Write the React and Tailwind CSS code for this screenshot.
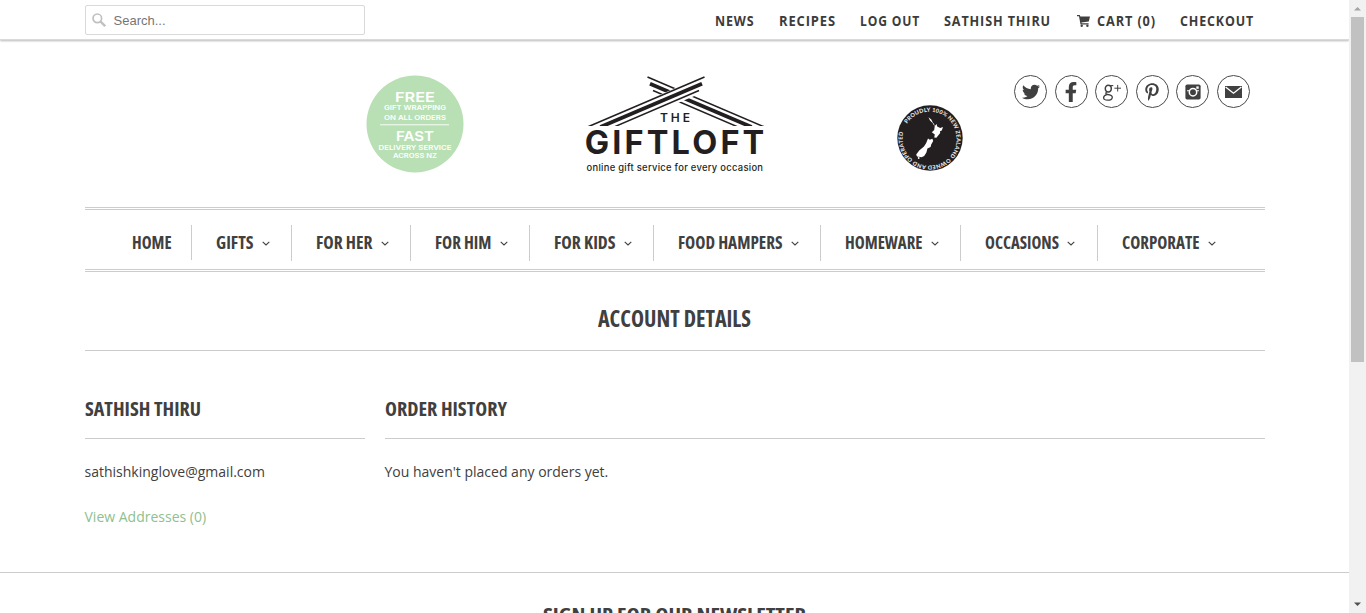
import { useLayoutEffect, useRef, useState } from 'react';
import { FaTwitter, FaFacebookF, FaPinterestP } from 'react-icons/fa';

/* Condenses its text horizontally so that it fills the width of its box. */
function Condensed({ className, children }) {
  const box = useRef(null);
  const text = useRef(null);
  const [scale, setScale] = useState(1);
  useLayoutEffect(() => {
    setScale(box.current.getBoundingClientRect().width / text.current.getBoundingClientRect().width);
  }, []);
  return (
    <span ref={box} className={`block shrink-0 whitespace-nowrap ${className}`}>
      <span ref={text} className="inline-block origin-left" style={{ transform: `scaleX(${scale})` }}>
        {children}
      </span>
    </span>
  );
}

function CartIcon() {
  return (
    <svg viewBox="0 0 13 12" className="mr-[7px] h-3 w-[13px] shrink-0" fill="#404040">
      <path d="M0 0h2.8l.5 1.5H13L11.8 6.6 4.4 7.4l.2.9h7v1.2H3.5L2 1.3H0z" />
      <circle cx="4.7" cy="10.7" r="1.2" />
      <circle cx="10.4" cy="10.7" r="1.2" />
    </svg>
  );
}

function TopBar() {
  return (
    <header className="flex h-10 shrink-0 justify-center border-b border-[#dadada] bg-white shadow-[0_1px_2px_rgba(0,0,0,0.28)]">
      <div className="flex w-[1180px] items-start justify-between">
        <div className="mt-[5px] ml-[0.5px] flex h-[30px] w-[280px] items-center rounded-[2px] border border-[#d9d9d9] pl-[6px]">
          <svg viewBox="0 0 14 14" className="h-[14px] w-[14px]" fill="none" stroke="#c0c0c0">
            <circle cx="5.3" cy="5.3" r="4.3" strokeWidth="1.7" />
            <path d="M8.6 8.6l4.6 4.6" strokeWidth="2.3" />
          </svg>
          <span className="mt-[2px] ml-[7.5px] font-['Liberation_Sans',sans-serif] text-[13px] text-[#757575]">Search...</span>
        </div>
        <nav className="mr-[11px] flex h-[41px] items-center gap-6 text-[14.5px] font-bold tracking-[1px] text-[#3c3c3c] [font-stretch:88%]">
          <Condensed className="w-[39.5px]">NEWS</Condensed>
          <Condensed className="w-[57px]">RECIPES</Condensed>
          <Condensed className="w-[60px]">LOG OUT</Condensed>
          <Condensed className="w-[107px]">SATHISH THIRU</Condensed>
          <span className="ml-[2px] flex items-center">
            <CartIcon />
            <Condensed className="w-[59px]">CART (0)</Condensed>
          </span>
          <Condensed className="w-[74px]">CHECKOUT</Condensed>
        </nav>
      </div>
    </header>
  );
}

function DeliveryBadge() {
  return (
    <svg viewBox="0 0 98 98" className="mt-[35px] ml-[281px] h-[98px] w-[98px] shrink-0">
      <circle cx="49" cy="49" r="48.5" fill="#b9dfb4" />
      <g fill="#fff" fontFamily="Inter, sans-serif" fontWeight="600" textAnchor="middle">
        <text x="49" y="26.5" fontSize="13.5" textLength="40" lengthAdjust="spacingAndGlyphs">FREE</text>
        <text x="49" y="34.8" fontSize="6.6" textLength="62" lengthAdjust="spacingAndGlyphs">GIFT WRAPPING</text>
        <text x="49" y="44.6" fontSize="6.6" textLength="62" lengthAdjust="spacingAndGlyphs">ON ALL ORDERS</text>
        <text x="49" y="65.5" fontSize="13.5" textLength="38" lengthAdjust="spacingAndGlyphs">FAST</text>
        <text x="49" y="74.6" fontSize="6.6" textLength="73" lengthAdjust="spacingAndGlyphs">DELIVERY SERVICE</text>
        <text x="49" y="83.3" fontSize="6.6" textLength="44" lengthAdjust="spacingAndGlyphs">ACROSS NZ</text>
      </g>
      <path d="M14 49.8h69" stroke="#fff" strokeWidth="0.9" />
    </svg>
  );
}

function Logo() {
  return (
    <svg viewBox="580 70 190 110" className="mt-[30px] ml-[116px] h-[110px] w-[190px] shrink-0">
      <clipPath id="eaves">
        <path d="M580 70h190v56H580z" />
      </clipPath>
      <g clipPath="url(#eaves)" fill="none" stroke="#231f20">
        <path d="M647.5 77l118 50.4" strokeWidth="1.6" />
        <path d="M650 83.8l101.6 43.2" strokeWidth="3.8" />
        <path d="M653 90.5l85 36.5" strokeWidth="1.5" />
        <path d="M586 127L703 76l-1.5 17L620 127.5z" fill="#fff" stroke="none" />
        <path d="M586.5 127.4L704.5 77" strokeWidth="1.6" />
        <path d="M600.4 127l101.6-43.2" strokeWidth="3.8" />
        <path d="M614 127l85-36.5" strokeWidth="1.5" />
      </g>
      <g fill="#231f20" fontFamily="Inter, sans-serif">
        <text x="660" y="122" fontSize="12" fontWeight="600" textLength="30" lengthAdjust="spacing">THE</text>
        <text x="584.8" y="154" fontSize="32.5" fontWeight="700" textLength="179.5" lengthAdjust="spacing">GIFTLOFT</text>
      </g>
      <text x="586.5" y="170.6" fill="#231f20" fontFamily="Inter, sans-serif" fontSize="9.4" fontWeight="500" textLength="176.5" lengthAdjust="spacing">
        online gift service for every occasion
      </text>
    </svg>
  );
}

function NewZealandBadge() {
  return (
    <svg viewBox="0 0 66 66" className="mt-[65px] ml-[127px] h-[66px] w-[66px] shrink-0">
      <defs>
        <path id="ring" d="M10.1 18.7A27 27 0 1 1 7.3 24.2A27 27 0 0 1 10.1 18.7" />
      </defs>
      <circle cx="33" cy="33" r="32.7" fill="#231f20" />
      <text fill="#e8e8e8" fontFamily="Lato, sans-serif" fontSize="5.6" fontWeight="900">
        <textPath href="#ring" textLength="160" lengthAdjust="spacing">PROUDLY 100% NEW ZEALAND OWNED AND OPERATED</textPath>
      </text>
      <g fill="#fff">
        <path d="M31.5 12.2l2.8 2.3 1.6 3.2 1.2 1.4.5 2.1 2-2.3.6 2.6 3 1.4 2.8-.9-1.2 3.4-1.8.8.2 1.8-3.8 4.8-2.2-.4.6-3-3-2.2 2.4-2.2.5-3.4-2.1-3.6-2.6-2.6z" />
        <path d="M31 33.6l1.8 1.2 2.6-1 .8 2.2-2 3.6-.6 2.4-3.2 1.6-1 3.8-2.2 3.6-2.6 1.2-4.6-.8-.8-1.8 3-4.2 4.8-3.8 2.2-3.6z" />
        <circle cx="21.7" cy="53" r="0.9" />
      </g>
    </svg>
  );
}

function Round({ children }) {
  return (
    <span className="flex h-[33px] w-[33px] items-center justify-center rounded-full border border-[#4a4a4a] text-[#404040]">
      {children}
    </span>
  );
}

function Social() {
  return (
    <div className="mt-[35px] ml-[51.5px] flex gap-[7.6px]">
      <Round><FaTwitter size={18} /></Round>
      <Round><FaFacebookF size={20} /></Round>
      <Round>
        <svg viewBox="0 0 20 20" className="h-5 w-5" fill="none" stroke="#404040">
          <ellipse cx="6.3" cy="6.6" rx="3" ry="3.4" strokeWidth="1.5" />
          <path d="M8.2 3.6h3.1" strokeWidth="1.1" />
          <path d="M5 9.8c-2 1.3-1.3 2.4.6 2.7 2.9.4 4.7.9 4.7 2.7 0 1.7-1.9 3-4.7 3-2.4 0-4-.9-4-2.5 0-1.5 1.3-2.5 3.2-3" strokeWidth="1.3" />
          <path d="M12.4 6.2h6.6M15.7 2.9v6.6" strokeWidth="1" />
        </svg>
      </Round>
      <Round><FaPinterestP size={18} /></Round>
      <Round>
        <svg viewBox="0 0 16 16" className="h-4 w-4">
          <rect x="0.4" y="0.5" width="15.2" height="15" rx="1.7" fill="#404040" />
          <path d="M11.3 2.4h2.4v2.4h-2.4z" fill="#fff" />
          <path d="M2 6.8h3M11 6.8h3" stroke="#fff" strokeWidth="1.1" />
          <circle cx="8" cy="8.2" r="3.7" fill="none" stroke="#fff" strokeWidth="1.5" />
        </svg>
      </Round>
      <Round>
        <svg viewBox="0 0 17 12" className="h-3 w-[17px]">
          <path fill="#404040" d="M0 0h17v12H0z" />
          <path d="M.6 1l7.9 6.2L16.4 1" fill="none" stroke="#fff" strokeWidth="1.4" />
        </svg>
      </Round>
    </div>
  );
}

const MENU = [
  { label: 'GIFTS', cell: 'w-[100px]', text: 'w-[37.5px]' },
  { label: 'FOR HER', cell: 'w-[119px]', text: 'w-[56.5px]' },
  { label: 'FOR HIM', cell: 'w-[119px]', text: 'w-[56.5px]' },
  { label: 'FOR KIDS', cell: 'w-[124px]', text: 'w-[61.5px]' },
  { label: 'FOOD HAMPERS', cell: 'w-[167px]', text: 'w-[104.5px]' },
  { label: 'HOMEWARE', cell: 'w-[140px]', text: 'w-[77.5px]' },
  { label: 'OCCASIONS', cell: 'w-[137px]', text: 'w-[74px]' },
  { label: 'CORPORATE', cell: 'w-[120px]', text: 'w-[77.5px]' },
];

function MainMenu() {
  return (
    <nav className="flex h-[65px] border-y-[3px] border-double border-[#ccc] pt-[15px] pl-[47px] text-[18.5px] font-bold text-[#404040] [font-stretch:75%]">
      <div className="flex h-[35px] w-[60px] items-center border-r border-[#ccc] pb-px">
        <Condensed className="w-[39.5px]">HOME</Condensed>
      </div>
      {MENU.map((m, i) => (
        <div key={m.label} className={`flex h-9 items-center pb-[2px] pl-[24px] ${m.cell} ${i < MENU.length - 1 ? 'border-r border-[#ccc]' : ''}`}>
          <Condensed className={m.text}>{m.label}</Condensed>
          <svg viewBox="0 0 8 5" className="mt-[3px] ml-[8.5px] h-[5px] w-2 shrink-0" fill="none" stroke="#404040" strokeWidth="1.1">
            <path d="M.7.8L4 3.9 7.3.8" />
          </svg>
        </div>
      ))}
    </nav>
  );
}

function Scrollbar() {
  return (
    <div className="flex w-[17px] shrink-0 flex-col items-center bg-[#f1f1f1]">
      <svg viewBox="0 0 17 17" className="h-[17px] w-[17px] shrink-0" fill="#a3a3a3"><path d="M5 10.5h7L8.5 7z" /></svg>
      <div className="h-[345px] w-[13px] bg-[#c1c1c1]" />
      <svg viewBox="0 0 17 17" className="mt-auto h-[17px] w-[17px] shrink-0" fill="#505050"><path d="M5 6.5h7L8.5 10z" /></svg>
    </div>
  );
}

export default function App() {
  return (
    <div className="flex h-[613px] w-[1366px] overflow-hidden bg-white font-['Open_Sans',sans-serif] text-[#404040]">
      <div className="flex min-w-0 flex-1 flex-col">
        <TopBar />
        <div className="mx-auto w-[1180px]">
          <div className="flex h-[167px] items-start">
            <DeliveryBadge />
            <Logo />
            <NewZealandBadge />
            <Social />
          </div>
          <MainMenu />
          <h1 className="flex h-[79px] items-center justify-center border-b border-[#ccc] pt-[14px] text-[23px] font-bold [font-stretch:75%]">
            <Condensed className="w-[153px]">ACCOUNT DETAILS</Condensed>
          </h1>
          <div className="flex gap-5 text-[14px]">
            <section className="w-[280px]">
              <h2 className="flex h-[88px] items-center border-b border-[#ccc] pt-[29px] text-[19.5px] font-bold [font-stretch:75%]">
                <Condensed className="w-[116px]">SATHISH THIRU</Condensed>
              </h2>
              <p className="mt-[22px] leading-[22px]">sathishkinglove@gmail.com</p>
              <p className="mt-[23px] leading-[22px] text-[#8fc08f]">View Addresses (0)</p>
            </section>
            <section className="w-[880px]">
              <h2 className="flex h-[88px] items-center border-b border-[#ccc] pt-[29px] text-[19.5px] font-bold [font-stretch:75%]">
                <Condensed className="w-[122px]">ORDER HISTORY</Condensed>
              </h2>
              <p className="mt-[22px] leading-[22px]">You haven't placed any orders yet.</p>
            </section>
          </div>
        </div>
        <footer className="mt-auto flex h-[41px] shrink-0 justify-center border-t border-[#ccc] pt-[27px] text-[20px] leading-[30px] font-bold [font-stretch:75%]">
          <Condensed className="w-[263px]">SIGN UP FOR OUR NEWSLETTER</Condensed>
        </footer>
      </div>
      <Scrollbar />
    </div>
  );
}
